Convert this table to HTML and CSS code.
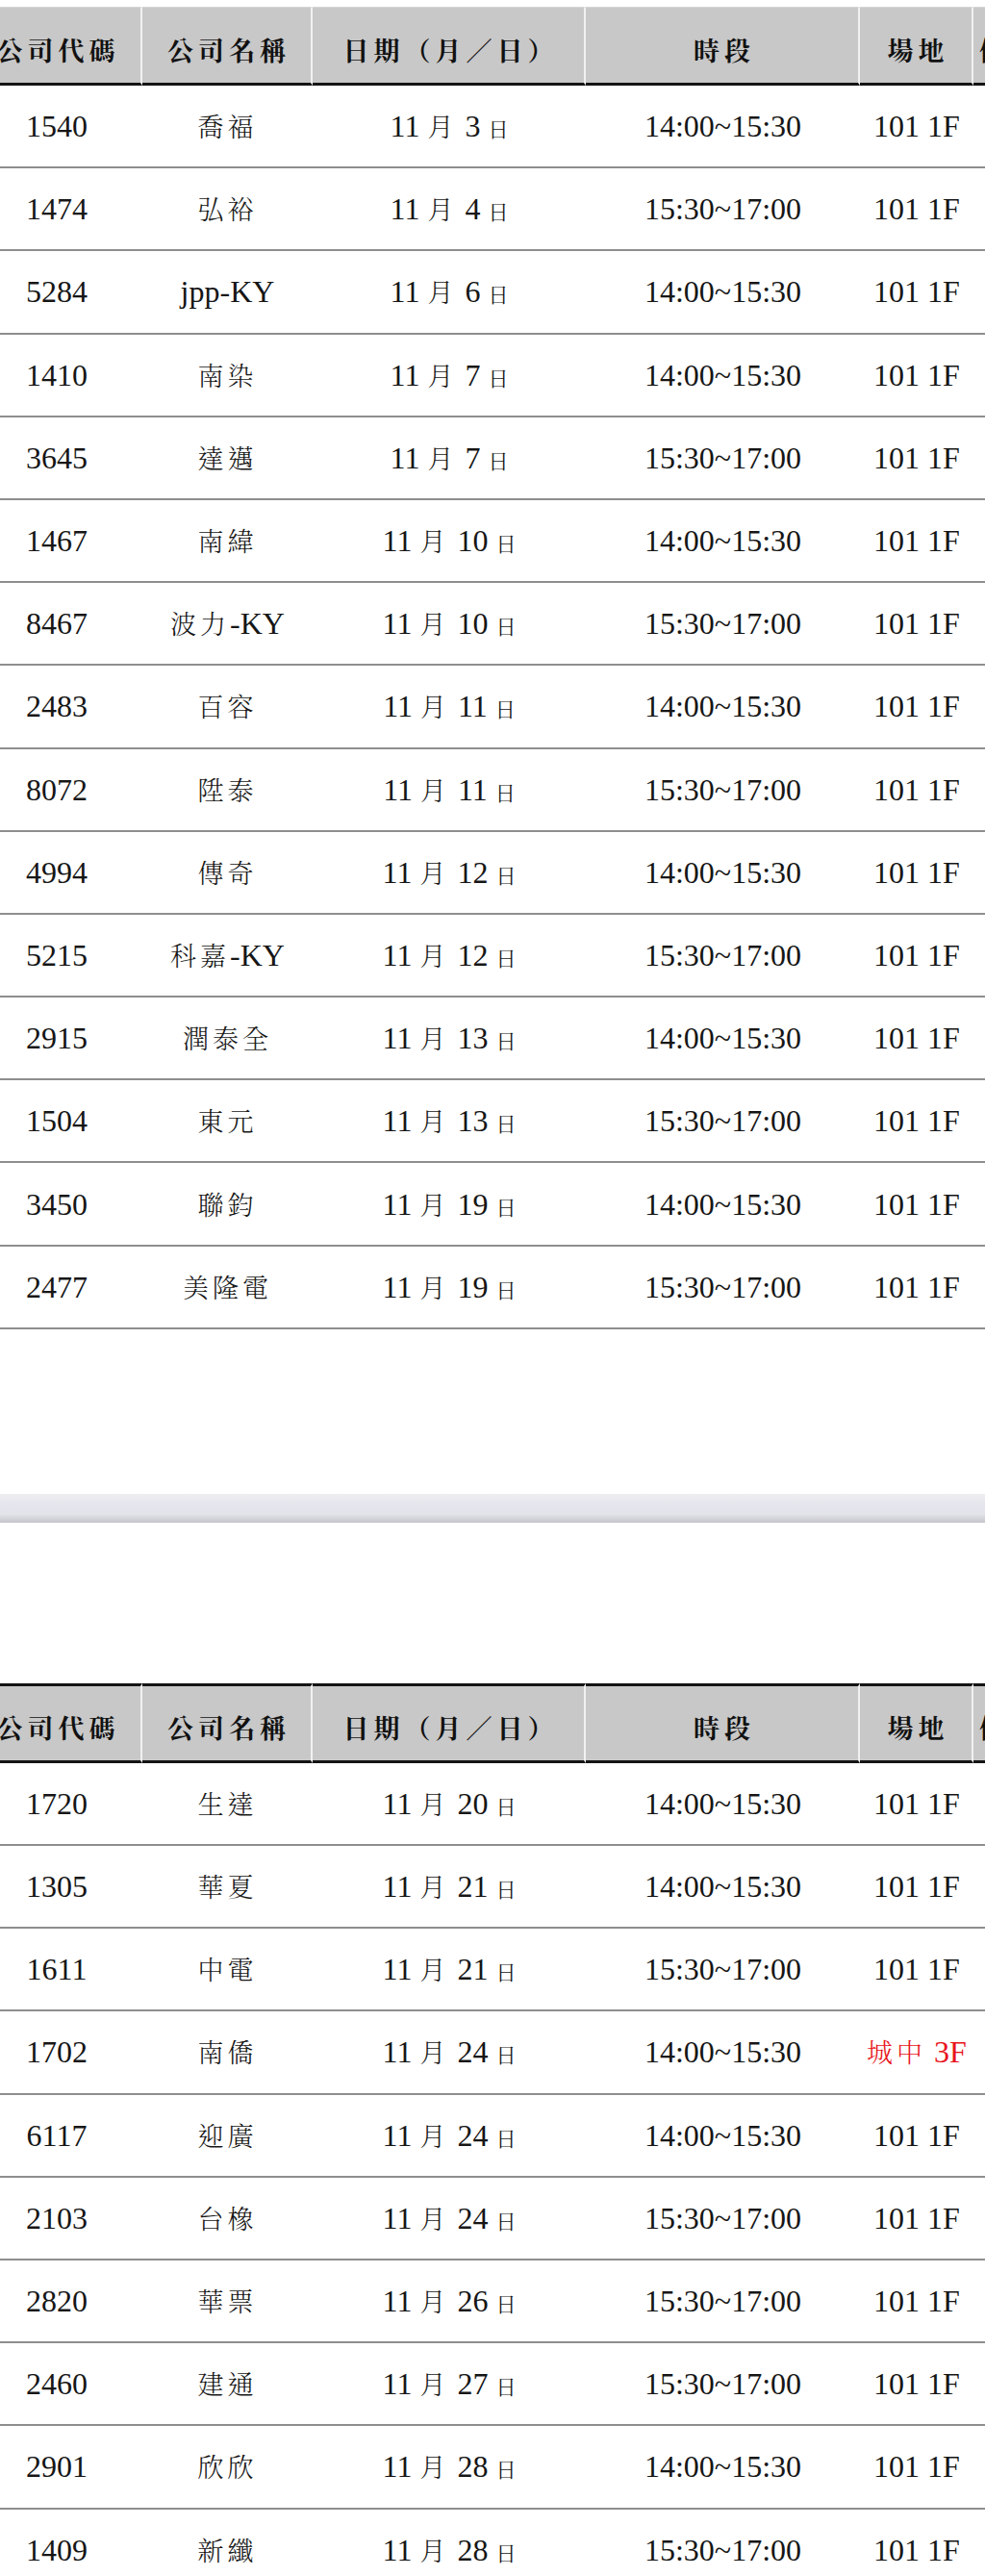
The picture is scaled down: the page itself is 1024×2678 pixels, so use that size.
FILE: index.html
```html
<!DOCTYPE html>
<html lang="zh-Hant">
<head>
<meta charset="utf-8">
<title>法說會時程</title>
<link rel="stylesheet" href="styles.css">
</head>
<body>
<div class="page">
  <div class="sheet sheet-first">
    <table class="sched sched-first">
      <colgroup>
        <col class="c-code"><col class="c-name"><col class="c-date"><col class="c-time"><col class="c-room"><col class="c-note">
      </colgroup>
      <thead>
        <tr><th>公司代碼</th><th>公司名稱</th><th>日期（月／日）</th><th>時段</th><th>場地</th><th>備註</th></tr>
      </thead>
      <tbody>
        <tr><td>1540</td><td><span class="zh">喬福</span></td><td>11 <span class="zh">月</span> 3 <span class="day">日</span></td><td>14:00~15:30</td><td>101 1F</td><td></td></tr>
        <tr><td>1474</td><td><span class="zh">弘裕</span></td><td>11 <span class="zh">月</span> 4 <span class="day">日</span></td><td>15:30~17:00</td><td>101 1F</td><td></td></tr>
        <tr><td>5284</td><td>jpp-KY</td><td>11 <span class="zh">月</span> 6 <span class="day">日</span></td><td>14:00~15:30</td><td>101 1F</td><td></td></tr>
        <tr><td>1410</td><td><span class="zh">南染</span></td><td>11 <span class="zh">月</span> 7 <span class="day">日</span></td><td>14:00~15:30</td><td>101 1F</td><td></td></tr>
        <tr><td>3645</td><td><span class="zh">達邁</span></td><td>11 <span class="zh">月</span> 7 <span class="day">日</span></td><td>15:30~17:00</td><td>101 1F</td><td></td></tr>
        <tr><td>1467</td><td><span class="zh">南緯</span></td><td>11 <span class="zh">月</span> 10 <span class="day">日</span></td><td>14:00~15:30</td><td>101 1F</td><td></td></tr>
        <tr><td>8467</td><td><span class="zh">波力</span>-KY</td><td>11 <span class="zh">月</span> 10 <span class="day">日</span></td><td>15:30~17:00</td><td>101 1F</td><td></td></tr>
        <tr><td>2483</td><td><span class="zh">百容</span></td><td>11 <span class="zh">月</span> 11 <span class="day">日</span></td><td>14:00~15:30</td><td>101 1F</td><td></td></tr>
        <tr><td>8072</td><td><span class="zh">陞泰</span></td><td>11 <span class="zh">月</span> 11 <span class="day">日</span></td><td>15:30~17:00</td><td>101 1F</td><td></td></tr>
        <tr><td>4994</td><td><span class="zh">傳奇</span></td><td>11 <span class="zh">月</span> 12 <span class="day">日</span></td><td>14:00~15:30</td><td>101 1F</td><td></td></tr>
        <tr><td>5215</td><td><span class="zh">科嘉</span>-KY</td><td>11 <span class="zh">月</span> 12 <span class="day">日</span></td><td>15:30~17:00</td><td>101 1F</td><td></td></tr>
        <tr><td>2915</td><td><span class="zh">潤泰全</span></td><td>11 <span class="zh">月</span> 13 <span class="day">日</span></td><td>14:00~15:30</td><td>101 1F</td><td></td></tr>
        <tr><td>1504</td><td><span class="zh">東元</span></td><td>11 <span class="zh">月</span> 13 <span class="day">日</span></td><td>15:30~17:00</td><td>101 1F</td><td></td></tr>
        <tr><td>3450</td><td><span class="zh">聯鈞</span></td><td>11 <span class="zh">月</span> 19 <span class="day">日</span></td><td>14:00~15:30</td><td>101 1F</td><td></td></tr>
        <tr><td>2477</td><td><span class="zh">美隆電</span></td><td>11 <span class="zh">月</span> 19 <span class="day">日</span></td><td>15:30~17:00</td><td>101 1F</td><td></td></tr>
      </tbody>
    </table>
  </div>

  <div class="divider"></div>

  <div class="sheet sheet-second">
    <table class="sched sched-second">
      <colgroup>
        <col class="c-code"><col class="c-name"><col class="c-date"><col class="c-time"><col class="c-room"><col class="c-note">
      </colgroup>
      <thead>
        <tr><th>公司代碼</th><th>公司名稱</th><th>日期（月／日）</th><th>時段</th><th>場地</th><th>備註</th></tr>
      </thead>
      <tbody>
        <tr><td>1720</td><td><span class="zh">生達</span></td><td>11 <span class="zh">月</span> 20 <span class="day">日</span></td><td>14:00~15:30</td><td>101 1F</td><td></td></tr>
        <tr><td>1305</td><td><span class="zh">華夏</span></td><td>11 <span class="zh">月</span> 21 <span class="day">日</span></td><td>14:00~15:30</td><td>101 1F</td><td></td></tr>
        <tr><td>1611</td><td><span class="zh">中電</span></td><td>11 <span class="zh">月</span> 21 <span class="day">日</span></td><td>15:30~17:00</td><td>101 1F</td><td></td></tr>
        <tr><td>1702</td><td><span class="zh">南僑</span></td><td>11 <span class="zh">月</span> 24 <span class="day">日</span></td><td>14:00~15:30</td><td class="alt-venue"><span class="zh">城中</span> 3F</td><td></td></tr>
        <tr><td>6117</td><td><span class="zh">迎廣</span></td><td>11 <span class="zh">月</span> 24 <span class="day">日</span></td><td>14:00~15:30</td><td>101 1F</td><td></td></tr>
        <tr><td>2103</td><td><span class="zh">台橡</span></td><td>11 <span class="zh">月</span> 24 <span class="day">日</span></td><td>15:30~17:00</td><td>101 1F</td><td></td></tr>
        <tr><td>2820</td><td><span class="zh">華票</span></td><td>11 <span class="zh">月</span> 26 <span class="day">日</span></td><td>15:30~17:00</td><td>101 1F</td><td></td></tr>
        <tr><td>2460</td><td><span class="zh">建通</span></td><td>11 <span class="zh">月</span> 27 <span class="day">日</span></td><td>15:30~17:00</td><td>101 1F</td><td></td></tr>
        <tr><td>2901</td><td><span class="zh">欣欣</span></td><td>11 <span class="zh">月</span> 28 <span class="day">日</span></td><td>14:00~15:30</td><td>101 1F</td><td></td></tr>
        <tr><td>1409</td><td><span class="zh">新纖</span></td><td>11 <span class="zh">月</span> 28 <span class="day">日</span></td><td>15:30~17:00</td><td>101 1F</td><td></td></tr>
      </tbody>
    </table>
  </div>
</div>
</body>
</html>
```

FILE: styles.css
```css
html, body {
  margin: 0;
  padding: 0;
  background: #ffffff;
}

.page {
  width: 1024px;
  height: 2678px;
  overflow: hidden;
  background: #ffffff;
  padding-top: 7px;
  box-sizing: border-box;
}

.sheet {
  width: 1024px;
  overflow: hidden;
}

.sched {
  table-layout: fixed;
  border-collapse: separate;
  border-spacing: 0;
  width: 1122px;
  margin-left: -30px;
  color: #161616;
  font-family: "Liberation Serif", "Noto Serif CJK TC", "Noto Sans CJK TC", serif;
  font-size: 32px;
}

.c-code { width: 178px; }
.c-name { width: 177px; }
.c-date { width: 284px; }
.c-time { width: 285px; }
.c-room { width: 118px; }
.c-note { width: 80px; }

.sched th {
  box-sizing: border-box;
  height: 81px;
  padding: 8px 0 0 0;
  background: #c8c8c8;
  border-right: 2px solid #f1f1f1;
  border-bottom: 3px solid #141414;
  font-family: "Noto Serif CJK TC", "Noto Sans CJK TC", sans-serif;
  font-weight: 700;
  font-size: 27px;
  letter-spacing: 5px;
  text-indent: 5px;
  text-align: center;
  vertical-align: middle;
  white-space: nowrap;
  color: #111111;
}

.sched th:last-child {
  border-right: none;
  text-align: left;
  text-indent: 6px;
}

.sched-first thead th {
  border-top: 1px solid #d6d6d6;
  height: 82px;
}

.sched-second thead th {
  border-top: 3px solid #141414;
  height: 83px;
}

.sched td {
  box-sizing: border-box;
  height: 86.2px;
  padding: 0;
  border-bottom: 2px solid #8e8e8e;
  text-align: center;
  vertical-align: middle;
  white-space: nowrap;
  line-height: 1;
}

.zh {
  font-family: "Noto Serif CJK TC", "Noto Sans CJK TC", sans-serif;
  font-weight: 300;
  font-size: 27px;
  letter-spacing: 4px;
}

.sched td .zh:last-child {
  letter-spacing: 4px;
}

.day {
  font-family: "Noto Serif CJK TC", "Noto Sans CJK TC", sans-serif;
  font-weight: 400;
  font-size: 21px;
}

.alt-venue {
  color: #e8141b;
}

.divider {
  height: 30px;
  margin: 171px 0 167px 0;
  background: linear-gradient(to bottom, #eeeef0 0%, #e6e6ee 30%, #e3e3ea 70%, #cfcfd5 90%, #c4c4ca 100%);
}
```
